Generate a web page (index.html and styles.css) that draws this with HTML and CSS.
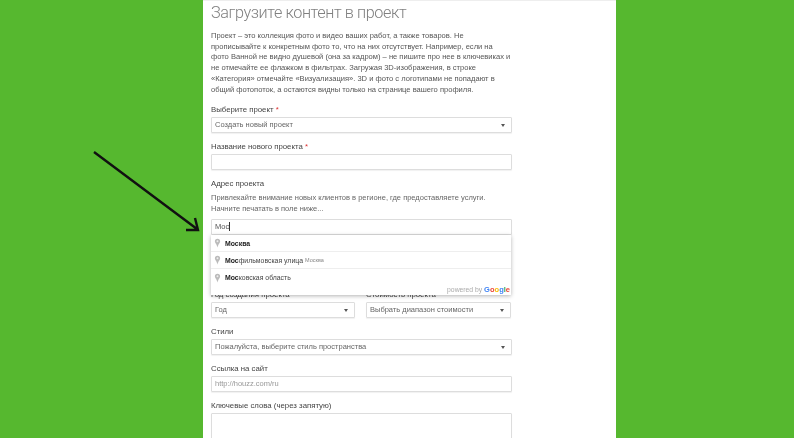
FILE: index.html
```html
<!DOCTYPE html>
<html lang="ru">
<head>
  <meta charset="UTF-8">
  <title>Загрузите контент в проект</title>
  <link rel="stylesheet" href="styles.css">
</head>
<body>
  <div class="panel">
    <h1>Загрузите контент в проект</h1>
    <p class="intro">Проект – это коллекция фото и видео ваших работ, а также товаров. Не прописывайте к конкретным фото то, что на них отсутствует. Например, если на фото Ванной не видно душевой (она за кадром) – не пишите про нее в ключевиках и не отмечайте ее флажком в фильтрах. Загружая 3D-изображения, в строке «Категория» отмечайте «Визуализация». 3D и фото с логотипами не попадают в общий фотопоток, а остаются видны только на странице вашего профиля.</p>

    <div class="field">
      <label>Выберите проект <span class="req">*</span></label>
      <div class="box select">Создать новый проект</div>
    </div>

    <div class="field">
      <label>Название нового проекта <span class="req">*</span></label>
      <div class="box"></div>
    </div>

    <div class="field address">
      <label>Адрес проекта</label>
      <p class="help">Привлекайте внимание новых клиентов в регионе, где предоставляете услуги.<br>Начните печатать в поле ниже...</p>
      <div class="box typed">Мос<span class="caret"></span></div>

      <!-- Autocomplete dropdown -->
      <div class="suggest">
        <div class="suggest-row">
          <svg class="pin" viewBox="0 0 8 11"><path d="M4 0.5a3 3 0 0 1 3 3c0 2-2 3-3 7c-1-4-3-5-3-7a3 3 0 0 1 3-3z"/><circle cx="4" cy="3.5" r="1.1"/></svg>
          <span class="place"><b>Москва</b></span>
        </div>
        <div class="suggest-row">
          <svg class="pin" viewBox="0 0 8 11"><path d="M4 0.5a3 3 0 0 1 3 3c0 2-2 3-3 7c-1-4-3-5-3-7a3 3 0 0 1 3-3z"/><circle cx="4" cy="3.5" r="1.1"/></svg>
          <span class="place"><b>Мос</b>фильмовская улица</span><span class="region">Москва</span>
        </div>
        <div class="suggest-row">
          <svg class="pin" viewBox="0 0 8 11"><path d="M4 0.5a3 3 0 0 1 3 3c0 2-2 3-3 7c-1-4-3-5-3-7a3 3 0 0 1 3-3z"/><circle cx="4" cy="3.5" r="1.1"/></svg>
          <span class="place"><b>Мос</b>ковская область</span>
        </div>
        <div class="powered">powered by <span class="g-logo"><i class="blue">G</i><i class="red">o</i><i class="yellow">o</i><i class="blue">g</i><i class="green">l</i><i class="red">e</i></span></div>
      </div>
    </div>

    <div class="field-row">
      <div class="field year">
        <label>Год создания проекта</label>
        <div class="box select">Год</div>
      </div>
      <div class="field cost">
        <label>Стоимость проекта</label>
        <div class="box select">Выбрать диапазон стоимости</div>
      </div>
    </div>

    <div class="field">
      <label>Стили</label>
      <div class="box select">Пожалуйста, выберите стиль пространства</div>
    </div>

    <div class="field">
      <label>Ссылка на сайт</label>
      <div class="box placeholder">http://houzz.com/ru</div>
    </div>

    <div class="field">
      <label>Ключевые слова (через запятую)</label>
      <div class="box textarea"></div>
    </div>
  </div>

  <!-- Hand drawn arrow over the screenshot -->
  <svg class="arrow" viewBox="0 0 794 438">
    <path d="M94 152 L197 229 M186 230 L198 230 L195 218"/>
  </svg>
</body>
</html>
```

FILE: styles.css
```css
/* Reset and base styles */
* {
  margin: 0;
  padding: 0;
  box-sizing: border-box;
}
html, body {
  height: 438px;
  overflow: hidden;
}
body {
  background: #56b82f;
  padding-left: 203px;
  font-family: 'Liberation Sans', Arial, sans-serif;
  color: #555;
}

/* Form panel */
.panel {
  width: 413px;
  height: 438px;
  overflow: hidden;
  background: #fff;
  border-top: 1px solid #eee;
  padding: 0 104px 0 8px;
  filter: blur(0.4px);
}
h1 {
  font-family: Roboto, sans-serif;
  font-weight: 300;
  font-size: 16.2px;
  letter-spacing: -0.4px;
  line-height: 23px;
  color: #808080;
  margin-bottom: 7px;
}
.intro {
  font-size: 7.55px;
  line-height: 10.7px;
  color: #555;
  margin-bottom: 10px;
}

/* Fields */
.field {
  position: relative;
  margin-bottom: 9px;
}
label {
  display: block;
  font-size: 7.8px;
  line-height: 10px;
  color: #444;
  margin-bottom: 2px;
}
.req { color: #d33; }
.help {
  font-size: 7.5px;
  line-height: 10.5px;
  color: #666;
  margin: 4px 0 5px;
}
.box {
  position: relative;
  height: 16px;
  border: 1px solid #ddd;
  border-radius: 1px;
  background: #fff;
  padding-left: 3px;
  font-size: 7.5px;
  line-height: 14px;
  color: #666;
  box-shadow: 0 1px 1px rgba(0, 0, 0, 0.06);
}
.select::after {
  content: '';
  position: absolute;
  right: 6px;
  top: 6px;
  border-left: 2.5px solid transparent;
  border-right: 2.5px solid transparent;
  border-top: 3px solid #555;
}
.placeholder { color: #999; }
.typed { color: #555; }
.caret {
  display: inline-block;
  width: 1px;
  height: 9px;
  background: #333;
  vertical-align: -2px;
}
.textarea { height: 60px; }

.address { margin-bottom: 55px; }

.field-row {
  display: flex;
  gap: 11px;
}
.year { width: 144px; }
.cost { width: 145px; }

/* Autocomplete */
.suggest {
  position: absolute;
  left: 0;
  right: 1px;
  top: 56px;
  height: 60px;
  background: #fff;
  box-shadow: 0 1px 4px rgba(0, 0, 0, 0.3);
  font-size: 6.9px;
  z-index: 2;
}
.suggest-row {
  display: flex;
  align-items: center;
  height: 17px;
  padding-left: 3px;
  border-bottom: 1px solid #eee;
  color: #444;
  white-space: pre;
}
.suggest-row:nth-child(3) { border-bottom: none; }
.pin {
  width: 7px;
  height: 10px;
  margin-right: 4px;
  fill: #bbb;
}
.pin circle { fill: #eee; }
.place b { color: #222; }
.region {
  font-size: 5.5px;
  color: #888;
  margin-left: 2px;
}
.powered {
  position: absolute;
  right: 1px;
  bottom: 1px;
  font-size: 6.8px;
  color: #aaa;
}
.g-logo {
  font-weight: bold;
  font-size: 7.5px;
}
.g-logo i { font-style: normal; }
.blue { color: #4285f4; }
.red { color: #ea4335; }
.yellow { color: #fbbc05; }
.green { color: #34a853; }

/* Arrow */
.arrow {
  position: absolute;
  left: 0;
  top: 0;
  width: 794px;
  height: 438px;
  pointer-events: none;
}
.arrow path {
  fill: none;
  stroke: #111;
  stroke-width: 2.4;
}
```
